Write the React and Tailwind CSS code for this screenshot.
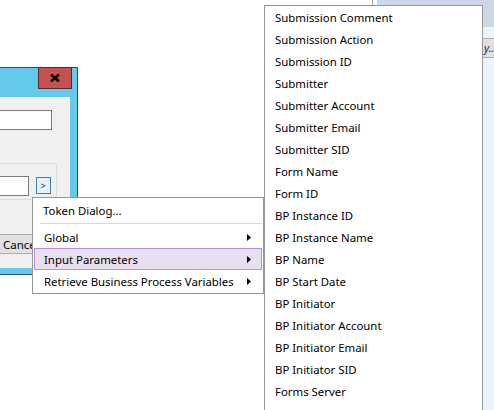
import React from "react";

const mainItems = [
  { label: "Global", sub: true },
  { label: "Input Parameters", sub: true, active: true },
  { label: "Retrieve Business Process Variables", sub: true },
];

const subItems = [
  "Submission Comment",
  "Submission Action",
  "Submission ID",
  "Submitter",
  "Submitter Account",
  "Submitter Email",
  "Submitter SID",
  "Form Name",
  "Form ID",
  "BP Instance ID",
  "BP Instance Name",
  "BP Name",
  "BP Start Date",
  "BP Initiator",
  "BP Initiator Account",
  "BP Initiator Email",
  "BP Initiator SID",
  "Forms Server",
  "BP ID",
];

function Arrow() {
  return (
    <svg width="4" height="7" viewBox="0 0 4 7" className="shrink-0">
      <path d="M0 0 L4 3.5 L0 7 Z" fill="#000" />
    </svg>
  );
}

function Dialog() {
  return (
    <div className="absolute left-[-22px] top-[67px] flex h-[208px] w-[100px] flex-col border border-[#24506e] bg-[#65c8ed]">
      {/* title bar */}
      <div className="flex h-[29px] shrink-0 justify-end pr-[5px]">
        <div className="mt-[-1px] flex h-[22px] w-[34px] items-center justify-center border border-[#5a2a2a] bg-[#c75050]">
          <svg width="10" height="8" viewBox="0 0 10 8">
            <path d="M1 0.5 L9 7.5 M9 0.5 L1 7.5" stroke="#000" strokeWidth="2.6" />
          </svg>
        </div>
      </div>
      {/* client area */}
      <div className="ml-[7px] mr-[7px] h-[171px] overflow-hidden bg-[#f0f0f0]">
        <div className="flex justify-end pr-[18px] pt-[13px]">
          <div className="h-[20px] w-[80px] border border-[#7a7a7a] bg-white" />
        </div>
        <div className="mr-[13px] mt-[33px] flex h-[37px] justify-end rounded-[3px] border border-[#dcdcdc] pr-[5px] pt-[12px]">
          <div className="h-[20px] w-[50px] border border-[#7a7a7a] bg-white" />
          <div className="ml-[7px] mt-[1px] flex h-[17px] w-[18px] items-center justify-center border border-[#3c7fb1] bg-[#e5f1fb] text-[9px] leading-none text-[#222]">
            &gt;
          </div>
        </div>
        <div className="ml-[4px] mt-[34px] flex h-[20px] w-[80px] items-center border border-[#adadad] bg-[#e1e1e1] pl-[12px] pt-[1px] text-[11.5px] text-black">
          Cancel
        </div>
      </div>
    </div>
  );
}

function MainMenu() {
  return (
    <div className="absolute left-[32px] top-[197px] w-[232px] border border-[#979797] bg-white py-[1px] text-[11.4px] text-black">
      <div className="flex h-[22px] items-center pl-[10px] pt-[2px]">Token Dialog...</div>
      <div className="flex h-[5px] items-center pl-[7px] pr-[1px]">
        <div className="h-px w-full bg-[#d7d7d7]" />
      </div>
      {mainItems.map((it) => (
        <div
          key={it.label}
          className={
            it.active
              ? "mx-[1px] flex h-[22px] items-center justify-between border border-[#b58ee0] bg-[#e8e0f0] pl-[9px] pr-[10px]"
              : "mx-[1px] flex h-[22px] items-center justify-between border border-transparent pl-[9px] pr-[10px]"
          }
        >
          <span className="pt-[2px]">{it.label}</span>
          {it.sub && <Arrow />}
        </div>
      ))}
    </div>
  );
}

function SubMenu() {
  return (
    <div className="absolute left-[264px] top-[5px] w-[219px] border border-[#979797] bg-white text-[11.4px] text-black">
      {subItems.map((s) => (
        <div key={s} className="flex h-[22px] items-center pl-[10px] pt-[2px]">
          {s}
        </div>
      ))}
    </div>
  );
}

function BackWindow() {
  return (
    <>
      <div className="absolute left-[372px] top-0 h-[40px] w-px bg-[#a0a0a0]" />
      <div className="absolute left-[377px] top-0 flex h-[410px] w-[130px] flex-col bg-[#ebf3fd]">
        <div className="h-[27px] shrink-0 bg-[#c9d7e6]" />
        <div className="ml-[105px] mt-[11px] flex h-[20px] w-[60px] items-center border border-[#adadad] bg-[#e1e1e1] pl-[1px] text-[11px] italic text-[#1a1a60]">
          y...
        </div>
      </div>
    </>
  );
}

export default function App() {
  return (
    <div
      className="relative h-[410px] w-[494px] overflow-hidden bg-white"
      style={{ fontFamily: '"Noto Sans", "Open Sans", sans-serif' }}
    >
      <BackWindow />
      <Dialog />
      <MainMenu />
      <SubMenu />
    </div>
  );
}
